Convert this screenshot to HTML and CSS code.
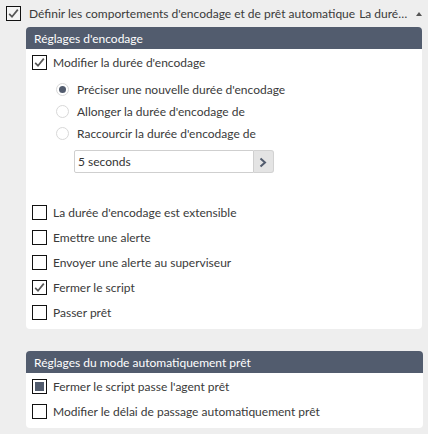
FILE: index.html
```html
<!DOCTYPE html>
<html lang="fr">
<head>
<meta charset="utf-8">
<link rel="stylesheet" href="styles.css">
</head>
<body>
<div class="top">
  <span class="cb checked"><svg viewBox="0 0 15 15"><path d="M3.2 7.8 L6 10.8 L11.8 3.6" /></svg></span>
  <span class="top-label">Définir les comportements d'encodage et de prêt automatique</span>
  <span class="top-summary">La durée d'encodage est extensible</span>
  <span class="caret"></span>
</div>

<section class="panel">
  <div class="panel-head">Réglages d'encodage</div>
  <div class="panel-body">
    <div class="row"><span class="cb checked"><svg viewBox="0 0 15 15"><path d="M3.2 7.8 L6 10.8 L11.8 3.6" /></svg></span><span>Modifier la durée d'encodage</span></div>
    <div class="radios">
      <div class="rrow"><span class="radio on"></span><span>Préciser une nouvelle durée d'encodage</span></div>
      <div class="rrow"><span class="radio"></span><span>Allonger la durée d'encodage de</span></div>
      <div class="rrow"><span class="radio"></span><span>Raccourcir la durée d'encodage de</span></div>
      <div class="field">
        <div class="input">5 seconds</div>
        <div class="btn"><svg viewBox="0 0 20 23"><path d="M7.5 7.5 L12 11.5 L7.5 15.5" /></svg></div>
      </div>
    </div>
    <div class="checks">
      <div class="row"><span class="cb"></span><span>La durée d'encodage est extensible</span></div>
      <div class="row"><span class="cb"></span><span>Emettre une alerte</span></div>
      <div class="row"><span class="cb"></span><span>Envoyer une alerte au superviseur</span></div>
      <div class="row"><span class="cb checked"><svg viewBox="0 0 15 15"><path d="M3.2 7.8 L6 10.8 L11.8 3.6" /></svg></span><span>Fermer le script</span></div>
      <div class="row"><span class="cb"></span><span>Passer prêt</span></div>
    </div>
  </div>
</section>

<section class="panel second">
  <div class="panel-head">Réglages du mode automatiquement prêt</div>
  <div class="panel-body">
    <div class="row"><span class="cb filled"><span class="fill"></span></span><span>Fermer le script passe l'agent prêt</span></div>
    <div class="row"><span class="cb"></span><span>Modifier le délai de passage automatiquement prêt</span></div>
  </div>
</section>
</body>
</html>
```

FILE: styles.css
```css
html, body {
  margin: 0;
  padding: 0;
}
body {
  background: #eeeeee;
  font-family: "Segoe UI", Lato, "Liberation Sans", sans-serif;
  font-size: 12px;
  color: #3a3a3a;
  width: 428px;
  height: 434px;
  overflow: hidden;
}
.top {
  display: flex;
  align-items: center;
  height: 27px;
  padding: 0 6px;
  box-sizing: border-box;
  white-space: nowrap;
}
.top-label {
  margin-left: 8px;
  flex: none;
}
.top-summary {
  margin-left: 4px;
  flex: 1;
  min-width: 0;
  overflow: hidden;
  text-overflow: ellipsis;
}
.caret {
  flex: none;
  width: 0;
  height: 0;
  margin-left: 3px;
  border-left: 3.5px solid transparent;
  border-right: 3.5px solid transparent;
  border-bottom: 4px solid #555;
}
.cb {
  flex: none;
  width: 15px;
  height: 15px;
  box-sizing: border-box;
  border: 1.5px solid #111;
  background: #fff;
  display: inline-flex;
  align-items: center;
  justify-content: center;
}
.top .cb {
  background: #f4f4f4;
}
.cb svg {
  width: 15px;
  height: 15px;
  flex: none;
}
.cb svg path {
  fill: none;
  stroke: #555;
  stroke-width: 1.7;
}
.cb .fill {
  width: 9px;
  height: 9px;
  background: #525c6e;
}
.panel {
  margin-left: 26px;
  width: 396px;
}
.panel.second {
  margin-top: 22px;
  width: 397px;
}
.panel-head {
  height: 22px;
  background: #525c6e;
  color: #fff;
  border-radius: 4px 4px 0 0;
  display: flex;
  align-items: center;
  padding-left: 8px;
}
.panel-body {
  background: #fff;
  border-radius: 0 0 4px 4px;
  padding: 1px 0 4px 6px;
}
.row {
  height: 25px;
  display: flex;
  align-items: center;
  gap: 6px;
}
.radios {
  padding-left: 24px;
  padding-top: 3px;
}
.rrow {
  height: 22px;
  display: flex;
  align-items: center;
  gap: 8px;
}
.radio {
  flex: none;
  width: 13px;
  height: 13px;
  box-sizing: border-box;
  border-radius: 50%;
  border: 1px solid #d8d8d8;
  background: #fff;
  display: inline-flex;
  align-items: center;
  justify-content: center;
}
.radio.on::after {
  content: "";
  width: 7px;
  height: 7px;
  border-radius: 50%;
  background: #525c6e;
}
.field {
  display: flex;
  margin-top: 6px;
  margin-left: 18px;
  height: 23px;
}
.input {
  width: 180px;
  box-sizing: border-box;
  border: 1px solid #cfcfcf;
  border-radius: 2px 0 0 2px;
  padding-left: 3px;
  display: flex;
  align-items: center;
  color: #333;
}
.btn {
  width: 20px;
  box-sizing: border-box;
  border: 1px solid #d2d2d2;
  border-left: none;
  border-radius: 0 3px 3px 0;
  background: #e4e4e4;
  display: flex;
}
.btn svg {
  width: 20px;
  height: 23px;
  margin-left: -1px;
}
.btn svg path {
  fill: none;
  stroke: #525c6e;
  stroke-width: 2;
}
.checks {
  margin-top: 27px;
}
```
